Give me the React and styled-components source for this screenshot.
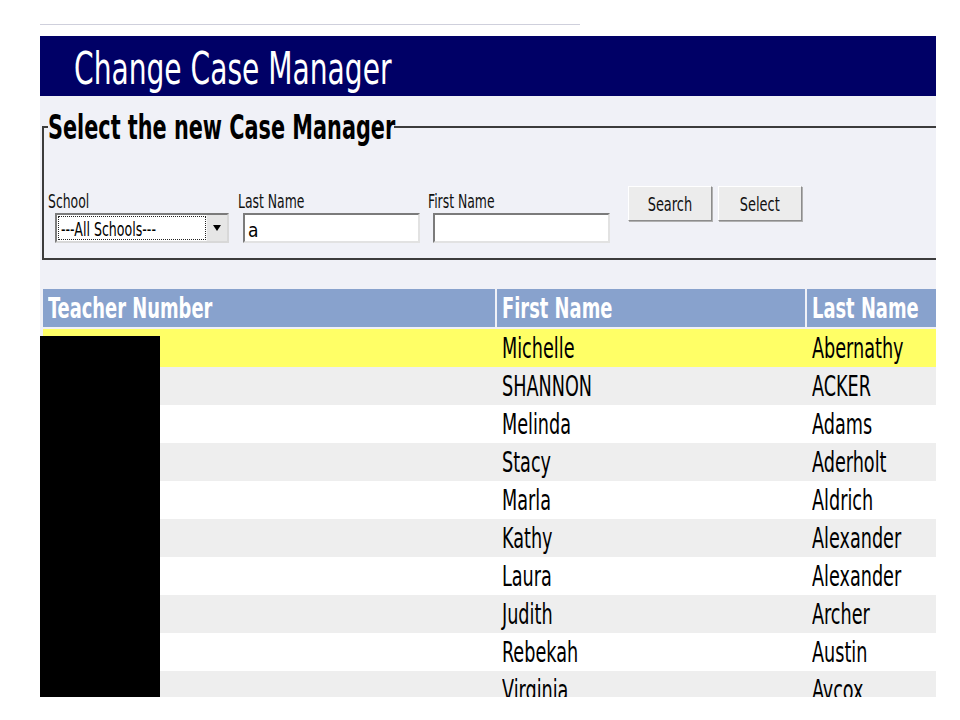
import styled, { createGlobalStyle } from "styled-components";

const GlobalStyle = createGlobalStyle`
  body {
    margin: 0;
    background: #ffffff;
    font-family: "DejaVu Sans Condensed", "DejaVu Sans", sans-serif;
  }
`;

const teachers = [
  { first: "Michelle", last: "Abernathy" },
  { first: "SHANNON", last: "ACKER" },
  { first: "Melinda", last: "Adams" },
  { first: "Stacy", last: "Aderholt" },
  { first: "Marla", last: "Aldrich" },
  { first: "Kathy", last: "Alexander" },
  { first: "Laura", last: "Alexander" },
  { first: "Judith", last: "Archer" },
  { first: "Rebekah", last: "Austin" },
  { first: "Virginia", last: "Aycox" },
];

const Page = styled.div`
  width: 896px;
  padding-left: 40px;
`;

const TopRule = styled.div`
  width: 540px;
  height: 1px;
  margin: 24px 0 11px;
  background: #cfd0dc;
`;

const Header = styled.div`
  height: 60px;
  box-sizing: border-box;
  padding: 11px 0 0 34px;
  background: #000066;
`;

// the screenshot text is tall and narrow, squeeze it horizontally
const Txt = styled.span`
  display: inline-block;
  white-space: nowrap;
  transform: scaleX(${(p) => p.$sx || 0.71});
  transform-origin: ${(p) => (p.$center ? "center" : "left")} center;
`;

const Title = styled.h1`
  margin: 0;
  font-size: 44px;
  line-height: 44px;
  font-weight: normal;
  color: #ffffff;
`;

const Panel = styled.div`
  background: #f0f1f7;
  padding: 13px 0 29px;
`;

const Fieldset = styled.fieldset`
  margin: 0 0 0 2px;
  padding: 45px 0 15px 4px;
  border: 2px solid #3c3c3c;
  border-right: none;
  min-width: 0;
`;

const Legend = styled.legend`
  width: 346px;
  padding: 0;
  font-size: 34px;
  line-height: 36px;
  font-weight: bold;
  color: #000000;
`;

const FieldRow = styled.div`
  display: flex;
  align-items: flex-start;
`;

const FieldGroup = styled.div`
  width: 190px;
`;

const Label = styled.label`
  display: block;
  height: 22px;
  font-size: 20px;
  line-height: 22px;
  color: #111111;
`;

const SelectBox = styled.div`
  display: flex;
  width: 174px;
  height: 30px;
  margin: 1px 0 0 7px;
  box-sizing: border-box;
  background: #ffffff;
  border: 2px solid;
  border-color: #7b7b7b #d8d8d8 #d8d8d8 #7b7b7b;
`;

const SelectValue = styled.div`
  flex: 1;
  margin: 1px 0 1px 1px;
  padding-left: 2px;
  border: 1px dotted #222222;
  font-size: 20px;
  line-height: 25px;
  color: #000000;
  overflow: visible;
`;

const SelectArrow = styled.div`
  width: 20px;
  display: flex;
  align-items: center;
  justify-content: center;
  background: #e6e6e6;
  border-left: 1px solid #f8f8f8;

  &::after {
    content: "";
    border-left: 4px solid transparent;
    border-right: 4px solid transparent;
    border-top: 6px solid #000000;
  }
`;

const TextInput = styled.input`
  display: block;
  width: 177px;
  height: 30px;
  margin: 1px 0 0 5px;
  padding: 3px 0 0 3px;
  box-sizing: border-box;
  background: #ffffff;
  border: 2px solid;
  border-color: #7b7b7b #e2e2e2 #e2e2e2 #7b7b7b;
  font-family: "DejaVu Sans Condensed", "DejaVu Sans", sans-serif;
  font-size: 19px;
  color: #000000;
  outline: none;
`;

const ButtonGroup = styled.div`
  display: flex;
  gap: 6px;
  margin: -4px 0 0 10px;
`;

const Button = styled.button`
  width: 84px;
  height: 35px;
  display: flex;
  align-items: center;
  justify-content: center;
  padding: 0;
  box-sizing: border-box;
  background: #ececec;
  border: 1px solid;
  border-color: #ffffff #8c8c8c #8c8c8c #ffffff;
  box-shadow: 1px 1px 0 #b0b0b0;
  font-family: "DejaVu Sans Condensed", "DejaVu Sans", sans-serif;
  font-size: 20px;
  color: #111111;
`;

const Results = styled.div`
  position: relative;
`;

const TableWrap = styled.div`
  height: 408px;
  overflow: hidden;
  padding-left: 3px;
  background: #f0f1f7;
`;

const Row = styled.div`
  display: grid;
  grid-template-columns: 452px 308px 129px;
  column-gap: 2px;
  margin-bottom: ${(p) => (p.$head ? "2px" : "0")};
  background: ${(p) => p.$bg || "transparent"};
`;

const HeadCell = styled.div`
  height: 38px;
  padding: 3px 0 0 5px;
  box-sizing: border-box;
  background: #88a2cd;
  color: #ffffff;
  font-size: 28px;
  line-height: 34px;
  font-weight: bold;
  overflow: visible;
`;

const Cell = styled.div`
  height: 38px;
  padding: 3px 0 0 5px;
  box-sizing: border-box;
  color: #000000;
  font-size: 28px;
  line-height: 34px;
  overflow: visible;
`;

const Redaction = styled.div`
  position: absolute;
  left: 0;
  top: 47px;
  width: 120px;
  height: 372px;
  background: #000000;
`;

const rowColor = (i) => {
  if (i === 0) return "#ffff66";
  return i % 2 === 1 ? "#eeeeee" : "#ffffff";
};

const App = () => {
  return (
    <Page>
      <GlobalStyle />
      <TopRule />
      <Header>
        <Title>
          <Txt>Change Case Manager</Txt>
        </Title>
      </Header>
      <Panel>
        <Fieldset>
          <Legend>
            <Txt $sx={0.68}>Select the new Case Manager</Txt>
          </Legend>
          <FieldRow>
            <FieldGroup>
              <Label>
                <Txt $sx={0.69}>School</Txt>
              </Label>
              <SelectBox>
                <SelectValue>
                  <Txt $sx={0.7}>---All Schools---</Txt>
                </SelectValue>
                <SelectArrow />
              </SelectBox>
            </FieldGroup>
            <FieldGroup>
              <Label>
                <Txt $sx={0.69}>Last Name</Txt>
              </Label>
              <TextInput defaultValue="a" />
            </FieldGroup>
            <FieldGroup>
              <Label>
                <Txt $sx={0.69}>First Name</Txt>
              </Label>
              <TextInput defaultValue="" />
            </FieldGroup>
            <ButtonGroup>
              <Button>
                <Txt $sx={0.72} $center>Search</Txt>
              </Button>
              <Button>
                <Txt $sx={0.72} $center>Select</Txt>
              </Button>
            </ButtonGroup>
          </FieldRow>
        </Fieldset>
      </Panel>
      <Results>
        <TableWrap>
          <Row $head>
            <HeadCell>
              <Txt>Teacher Number</Txt>
            </HeadCell>
            <HeadCell>
              <Txt>First Name</Txt>
            </HeadCell>
            <HeadCell>
              <Txt>Last Name</Txt>
            </HeadCell>
          </Row>
          {teachers.map((t, i) => (
            <Row key={i} $bg={rowColor(i)}>
              <Cell />
              <Cell>
                <Txt $sx={0.7}>{t.first}</Txt>
              </Cell>
              <Cell>
                <Txt $sx={0.7}>{t.last}</Txt>
              </Cell>
            </Row>
          ))}
        </TableWrap>
        <Redaction />
      </Results>
    </Page>
  );
};

export default App;
